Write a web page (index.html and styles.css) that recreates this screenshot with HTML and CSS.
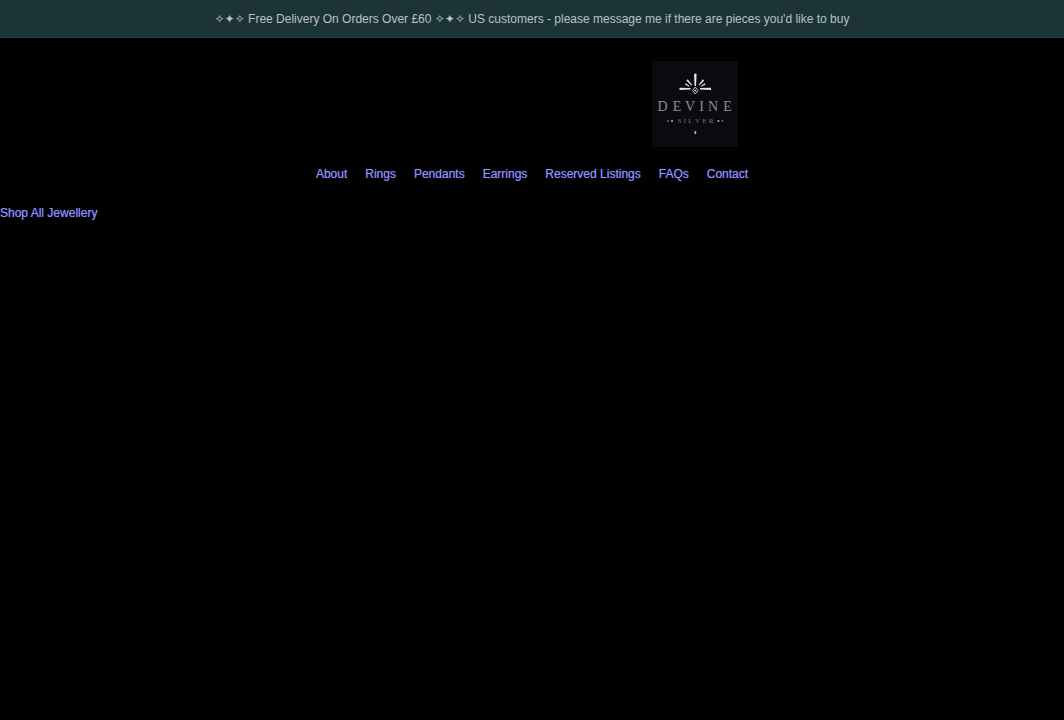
FILE: index.html
```html
<!DOCTYPE html>
<html lang="en">
<head>
  <meta charset="utf-8">
  <meta name="viewport" content="width=device-width, initial-scale=1">
  <title>Devine Silver</title>
  <link rel="stylesheet" href="styles.css">
</head>
<body>
  <!-- Announcement bar -->
  <div class="announcement">
    <p>✧✦✧ Free Delivery On Orders Over £60 ✧✦✧ US customers - please message me if there are pieces you'd like to buy</p>
  </div>

  <header class="header">
    <a class="logo" href="#" aria-label="Devine Silver">
      <svg viewBox="0 0 86 86" role="img">
        <rect width="86" height="86" fill="#0a0a10"/>
        <!-- Rays -->
        <g fill="#e6e6e8">
          <path d="M42 13.5 Q43.3 11.5 44.6 13.5 L44 25 H42.6Z"/>
          <path d="M27.5 26.7 L38.5 27 V28.6 L27.5 29Z"/>
          <path d="M59 26.7 L48 27 V28.6 L59 29Z"/>
          <path d="M34.4 19.4 L35.8 18.3 L40 24 L39.2 24.6Z"/>
          <path d="M52.2 19.4 L50.8 18.3 L46.6 24 L47.4 24.6Z"/>
          <path d="M33 23.4 L33.8 22.2 L37.6 25 L37.2 25.8Z"/>
          <path d="M53.6 23.4 L52.8 22.2 L49 25 L49.4 25.8Z"/>
        </g>
        <path d="M43.3 26 L46 29.5 L43.3 33 L40.6 29.5Z" fill="none" stroke="#c8c8cc"/>
        <circle cx="43.3" cy="29.5" r="1" fill="#c8c8cc"/>
        <!-- Name -->
        <g class="logo-text">
          <text class="logo-name" y="50"><tspan x="10.5">D</tspan><tspan x="25">E</tspan><tspan x="38">V</tspan><tspan x="49.5">I</tspan><tspan x="61">N</tspan><tspan x="75.5">E</tspan></text>
          <text class="logo-sub" y="62"><tspan x="27.5">S</tspan><tspan x="33">I</tspan><tspan x="38.5">L</tspan><tspan x="45.5">V</tspan><tspan x="52.5">E</tspan><tspan x="59">R</tspan></text>
        </g>
        <g fill="#b0b0b4">
          <circle cx="16" cy="60" r=".8"/>
          <circle cx="20" cy="60" r="1"/>
          <circle cx="66.5" cy="60" r="1"/>
          <circle cx="70.5" cy="60" r=".8"/>
          <path d="M43.3 69.5 L44.6 71.5 L43.3 73.5 L42 71.5Z"/>
        </g>
      </svg>
    </a>
    <nav class="menu" aria-label="Main">
      <a href="#">About</a>
      <a href="#">Rings</a>
      <a href="#">Pendants</a>
      <a href="#">Earrings</a>
      <a href="#">Reserved Listings</a>
      <a href="#">FAQs</a>
      <a href="#">Contact</a>
    </nav>
  </header>

  <main>
    <a class="shop-all" href="#">Shop All Jewellery</a>
  </main>
</body>
</html>
```

FILE: styles.css
```css
body {
  margin: 0;
  background: #000000;
  color: #b8c2c3;
  font-family: "Liberation Sans", Arial, "DejaVu Sans", sans-serif;
  font-size: 12px;
  line-height: 18px;
}

a {
  color: #9494ee;
  text-decoration: none;
  text-shadow: 0 0 1px #4a4ad0;
}

/* Announcement bar */
.announcement {
  padding: 10px 16px 9px;
  background: #1c3438;
  border-bottom: 1px solid #2b3e41;
  text-align: center;
}

.announcement p {
  margin: 0;
}

/* Logo sits two thirds of the way along */
.header {
  display: grid;
  grid-template-columns: 2fr auto 1fr;
  row-gap: 18px;
  padding-top: 23px;
}

.logo {
  grid-column: 2;
  width: 86px;
  text-shadow: none;
}

.logo svg {
  display: block;
  width: 100%;
}

.logo-text {
  font-family: "Liberation Serif", "Times New Roman", serif;
  text-anchor: middle;
}

.logo-name {
  font-size: 14px;
  fill: #8e8e92;
}

.logo-sub {
  font-size: 7px;
  fill: #77777c;
}

.menu {
  grid-column: 1 / -1;
  display: flex;
  flex-wrap: wrap;
  justify-content: center;
  gap: 18px;
}

.shop-all {
  display: inline-block;
  margin-top: 21px;
}
```
